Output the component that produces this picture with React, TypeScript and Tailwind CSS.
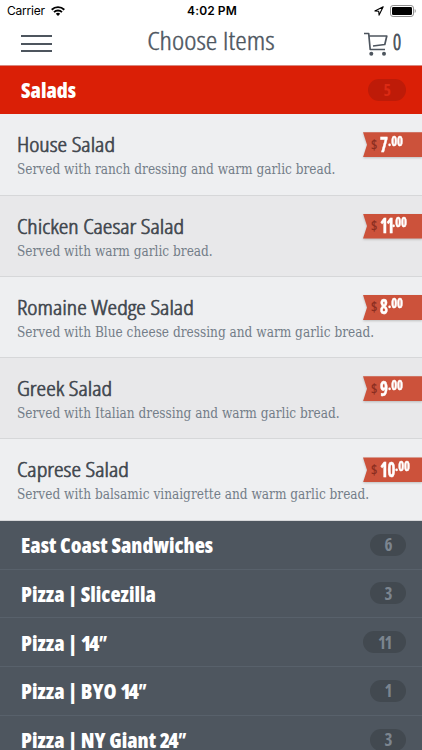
import React from 'react';

interface Item {
  name: string;
  description: string;
  dollars: string;
  width: string;
}

interface Category {
  name: string;
  size?: string;
  count: number;
}

const items: Item[] = [
  { name: 'House Salad', description: 'Served with ranch dressing and warm garlic bread.', dollars: '7', width: 'w-[7.500px]' },
  { name: 'Chicken Caesar Salad', description: 'Served with warm garlic bread.', dollars: '11', width: 'w-[12px] tracking-[-2px]' },
  { name: 'Romaine Wedge Salad', description: 'Served with Blue cheese dressing and warm garlic bread.', dollars: '8', width: 'w-[8px]' },
  { name: 'Greek Salad', description: 'Served with Italian dressing and warm garlic bread.', dollars: '9', width: 'w-[8px]' },
  { name: 'Caprese Salad', description: 'Served with balsamic vinaigrette and warm garlic bread.', dollars: '10', width: 'w-[15px] tracking-[-0.5px]' },
];

const categories: Category[] = [
  { name: 'East Coast Sandwiches', count: 6 },
  { name: 'Pizza | Slicezilla', count: 3 },
  { name: 'Pizza | ', size: '14', count: 11 },
  { name: 'Pizza | BYO ', size: '14', count: 1 },
  { name: 'Pizza | NY Giant ', size: '24', count: 3 },
];

const StatusBar: React.FC = () => (
  <div className="h-[22px] grid grid-cols-3 items-center pl-[7px] pr-[5px] font-['Inter',sans-serif] text-[12px] leading-none text-black">
    <div className="flex items-center gap-[6px]">
      <span className="tracking-[-0.2px]">Carrier</span>
      <svg className="w-[14px] h-[10px]" viewBox="0 0 14 10" fill="none" stroke="currentColor" strokeWidth="1.9">
        <path d="M.7 3.7a9 9 0 0 1 12.6 0M3 6.1a5.7 5.7 0 0 1 8 0" />
        <path d="M7 10 4.8 7.8a3.1 3.1 0 0 1 4.400 0z" fill="currentColor" stroke="none" />
      </svg>
    </div>
    <span className="text-center font-semibold tracking-[0.1px]">4:02 PM</span>
    <div className="flex items-center justify-end gap-[6px]">
      <svg className="w-[10px] h-[10px]" viewBox="0 0 10 10" fill="none" stroke="currentColor" strokeWidth="1.1" strokeLinejoin="round">
        <path d="M9.2.8.9 4.9l3.8.3.4 3.9z" />
      </svg>
      <svg className="w-[27px] h-[12px]" viewBox="0 0 27 12">
        <rect x=".5" y=".5" width="23" height="11" rx="2.6" fill="none" stroke="#8e8e8e" />
        <rect x="2" y="2" width="20" height="8" rx="1.3" />
        <path d="M24.7 4v4c1.400-.5 1.400-3.500 0-4z" fill="#8e8e8e" />
      </svg>
    </div>
  </div>
);

const Header: React.FC = () => (
  <header className="h-[43px] flex items-center justify-between px-[21px] text-[#4d555e]">
    <div className="w-[60px]">
      <div className="w-[31px] h-[17px] flex flex-col justify-between">
        <i className="h-[2px] bg-[#4d555e]" />
        <i className="h-[2px] bg-[#4d555e]" />
        <i className="h-[2px] bg-[#4d555e]" />
      </div>
    </div>
    <h1 className="pb-[7px] text-[26px] font-stretch-condensed font-light leading-none whitespace-nowrap scale-x-[1.12] [-webkit-text-stroke:0.4px_#4d555e]">Choose Items</h1>
    <div className="w-[60px] flex items-center justify-end gap-[5px]">
      <svg className="w-[24px] h-[24px] shrink-0" viewBox="0 0 24 24" fill="none" stroke="currentColor" strokeWidth="1.7" strokeLinejoin="round">
        <path d="M0 1.500h4.700L6.200 17.500H21M5 4h17.800l-2 8.500L9 14" />
        <circle cx="7.300" cy="21.800" r="2" fill="currentColor" stroke="none" />
        <circle cx="20" cy="21.800" r="2" fill="currentColor" stroke="none" />
      </svg>
      <span className="pb-[5px] w-[8px] text-[22px] font-light font-stretch-condensed leading-none origin-left scale-x-[0.9] [-webkit-text-stroke:0.9px_#4d555e]">0</span>
    </div>
  </header>
);

const PriceTag: React.FC<{ dollars: string; width: string }> = ({ dollars, width }) => (
  <div className="mt-[18px] w-[59px] h-[25px] shrink-0 drop-shadow-[0_1px_1px_rgba(0,0,0,0.2)]">
    <div className="h-[25px] pl-[8px] flex items-center bg-[#cc523b] text-white font-bold font-stretch-condensed leading-none [clip-path:polygon(0_0,100%_0,100%_100%,0_100%,4px_50%)]">
      <span className="w-[9px] text-[14px] font-semibold text-[#8a2d20]">$</span>
      <span className="h-[22px] flex items-start">
        <span className={`${width} text-[21.500px] leading-[19px] origin-left scale-x-[0.78] [-webkit-text-stroke:0.5px_white]`}>{dollars}</span>
        <span className="text-[14px] leading-[14px] font-bold origin-left scale-x-[0.9] [-webkit-text-stroke:0.4px_white]">.00</span>
      </span>
    </div>
  </div>
);

const ItemRow: React.FC<{ item: Item }> = ({ item }) => (
  <li className="h-[81.300px] flex justify-between border-b border-[#d6d7d9] bg-[#eeeff1] even:bg-[#e8e8ea]">
    <div className="pt-[17px] pl-[17px] w-0 whitespace-nowrap">
      <h3 className="w-max text-[21px] leading-[26px] font-light font-stretch-condensed origin-left scale-x-[1.155] [-webkit-text-stroke:0.6px_#3f464d] text-[#3f464d]">{item.name}</h3>
      <p className="w-max font-['DejaVu_Serif_Condensed','DejaVu_Serif',serif] font-stretch-semi-condensed text-[14.500px] leading-[24px] origin-left scale-x-[0.932] text-[#737d88]">{item.description}</p>
    </div>
    <PriceTag dollars={item.dollars} width={item.width} />
  </li>
);

const App: React.FC = () => {
  return (
    <div className="h-[750px] overflow-hidden bg-white font-['Open_Sans',sans-serif]">
      <StatusBar />
      <Header />
      <section>
        <div className="h-[49.300px] pl-[21px] pr-[16px] flex items-center justify-between border-t border-[#d88880] bg-[#da1f06]">
          <h2 className="pt-px text-[21px] font-extrabold font-stretch-condensed text-white">Salads</h2>
          <span className="h-[22px] px-[15px] rounded-full flex items-center justify-center bg-[#be1b08] text-[16px] font-bold font-stretch-condensed text-[#dc2a14]">5</span>
        </div>
        <ul>
          {items.map((item) => (
            <ItemRow key={item.name} item={item} />
          ))}
        </ul>
      </section>
      <ul>
        {categories.map((category) => (
          <li key={category.name} className="h-[48.800px] pl-[21px] pr-[16px] flex items-center justify-between border-b border-[#58616b] bg-[#4e565f]">
            <h2 className="pt-[2px] text-[21px] font-extrabold font-stretch-condensed text-white whitespace-pre">
              {category.name}
              {category.size && <span className="tracking-[-2px]">{category.size}<i className="font-bold">"</i></span>}
            </h2>
            <span className="h-[22px] px-[15px] rounded-full flex items-center justify-center bg-[#424950] text-[17px] font-bold font-stretch-condensed tracking-[-1.500px] text-[#7c858f]">{category.count}</span>
          </li>
        ))}
      </ul>
    </div>
  );
};

export default App;
